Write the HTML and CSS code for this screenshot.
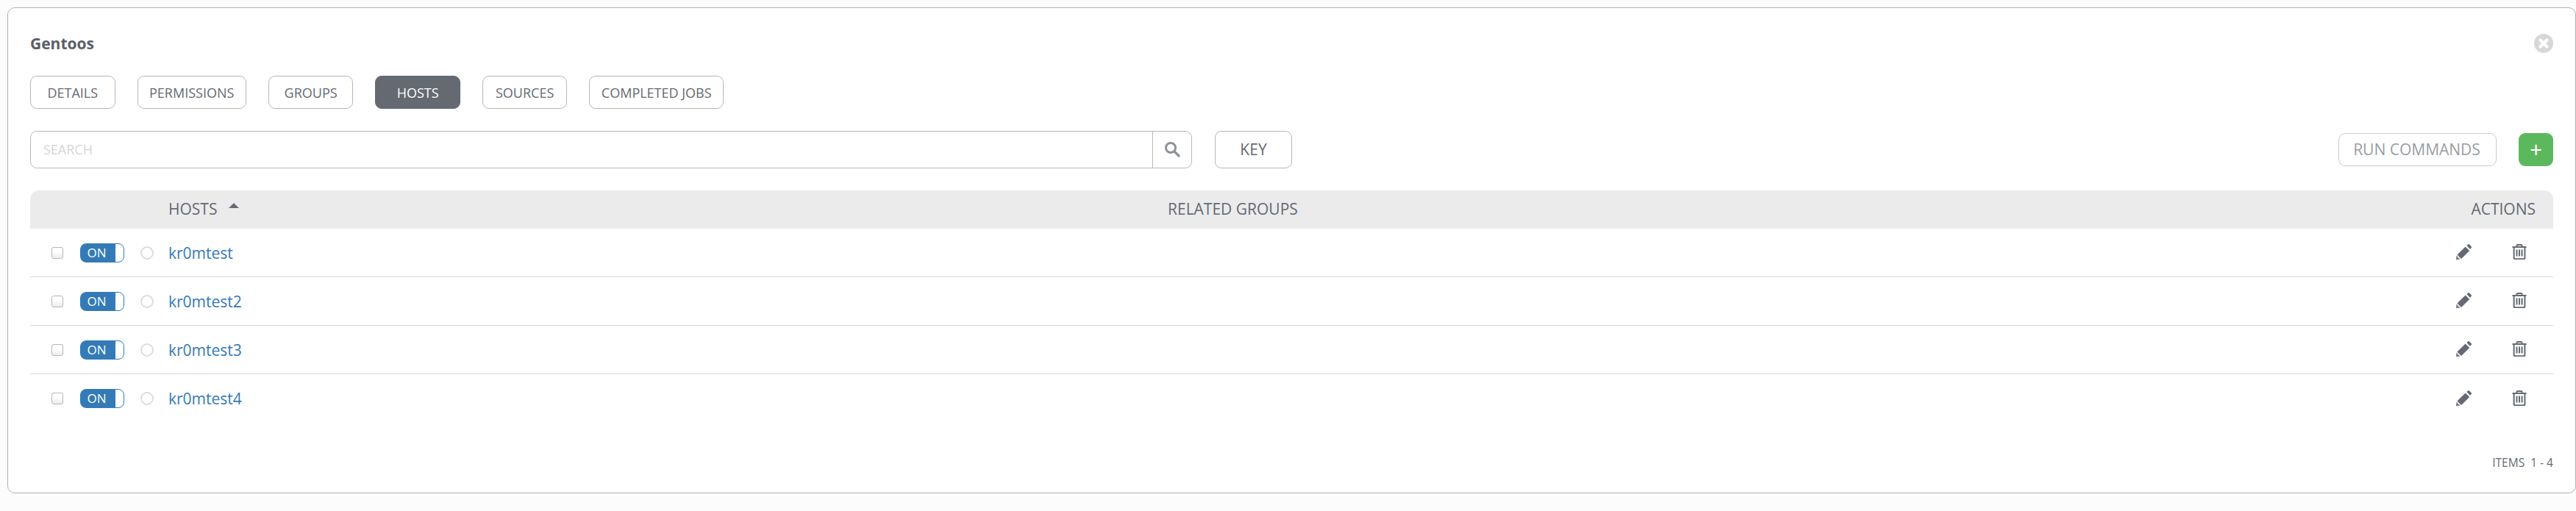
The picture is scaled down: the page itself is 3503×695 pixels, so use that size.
FILE: index.html
```html
<!DOCTYPE html>
<html>
<head>
<meta charset="utf-8">
<title>Gentoos</title>
<link rel="stylesheet" href="styles.css">
</head>
<body>
<section class="panel">
  <header class="head">
    <h1 class="title">Gentoos</h1>
    <svg class="close" viewBox="0 0 26 26"><circle cx="13" cy="13" r="13" fill="#d7d7d7"/><path d="M8.6 8.6l8.8 8.8M17.4 8.6l-8.8 8.8" stroke="#fff" stroke-width="4.4" stroke-linecap="round"/></svg>
  </header>
  <nav class="tabs">
    <a class="tab">DETAILS</a>
    <a class="tab">PERMISSIONS</a>
    <a class="tab">GROUPS</a>
    <a class="tab active">HOSTS</a>
    <a class="tab">SOURCES</a>
    <a class="tab">COMPLETED JOBS</a>
  </nav>
  <div class="toolbar">
    <div class="search">
      <span class="search-input">SEARCH</span>
      <span class="search-btn"><svg viewBox="0 0 22 22" width="22" height="22"><circle cx="9" cy="9" r="6.6" fill="none" stroke="#8f929a" stroke-width="3"/><path d="M14 14l6 6" stroke="#8f929a" stroke-width="3.2" stroke-linecap="round"/></svg></span>
    </div>
    <button class="key">KEY</button>
    <button class="run">RUN COMMANDS</button>
    <button class="add">+</button>
  </div>
  <div class="table">
    <div class="row thead">
      <span class="c-select"></span>
      <span class="c-name">HOSTS<svg class="sort" viewBox="0 0 14 7" width="14" height="7"><path d="M7 0.4l6.6 6.6H0.4z" fill="#646972" stroke="#646972" stroke-width="0.6" stroke-linejoin="round"/></svg></span>
      <span class="c-groups">RELATED GROUPS</span>
      <span class="c-actions">ACTIONS</span>
    </div>
    <div class="row">
      <span class="c-select"><i class="check"></i><span class="toggle"><b>ON</b></span><i class="status"></i></span>
      <a class="c-name link">kr0mtest</a>
      <span class="c-groups"></span>
      <span class="c-actions"><svg class="pencil" viewBox="0 0 21 21"><path d="M14.4 2l1.5-1.5a1.5 1.5 0 0 1 2.1 0l2.5 2.5a1.5 1.5 0 0 1 0 2.1L19 7.1zM12.6 3.4l5.6 5.6L7 20 1.4 14.6zM.6 15.6l4.9 4.9L0 21z" fill="#646972"/><path d="M1.6 17.4l2 2" stroke="#fff" stroke-width="1"/></svg><svg class="trash" viewBox="0 0 20 21"><path d="M0.5 4h19M6.5 4V2a1 1 0 0 1 1-1h5a1 1 0 0 1 1 1v2M2.6 4v15a1.4 1.4 0 0 0 1.4 1.2h12a1.4 1.4 0 0 0 1.4-1.2V4" fill="none" stroke="#646972" stroke-width="2"/><path d="M6.5 7.5v9M10 7.5v9M13.5 7.5v9" stroke="#646972" stroke-width="2"/></svg></span>
    </div>
    <div class="row">
      <span class="c-select"><i class="check"></i><span class="toggle"><b>ON</b></span><i class="status"></i></span>
      <a class="c-name link">kr0mtest2</a>
      <span class="c-groups"></span>
      <span class="c-actions"><svg class="pencil" viewBox="0 0 21 21"><path d="M14.4 2l1.5-1.5a1.5 1.5 0 0 1 2.1 0l2.5 2.5a1.5 1.5 0 0 1 0 2.1L19 7.1zM12.6 3.4l5.6 5.6L7 20 1.4 14.6zM.6 15.6l4.9 4.9L0 21z" fill="#646972"/><path d="M1.6 17.4l2 2" stroke="#fff" stroke-width="1"/></svg><svg class="trash" viewBox="0 0 20 21"><path d="M0.5 4h19M6.5 4V2a1 1 0 0 1 1-1h5a1 1 0 0 1 1 1v2M2.6 4v15a1.4 1.4 0 0 0 1.4 1.2h12a1.4 1.4 0 0 0 1.4-1.2V4" fill="none" stroke="#646972" stroke-width="2"/><path d="M6.5 7.5v9M10 7.5v9M13.5 7.5v9" stroke="#646972" stroke-width="2"/></svg></span>
    </div>
    <div class="row">
      <span class="c-select"><i class="check"></i><span class="toggle"><b>ON</b></span><i class="status"></i></span>
      <a class="c-name link">kr0mtest3</a>
      <span class="c-groups"></span>
      <span class="c-actions"><svg class="pencil" viewBox="0 0 21 21"><path d="M14.4 2l1.5-1.5a1.5 1.5 0 0 1 2.1 0l2.5 2.5a1.5 1.5 0 0 1 0 2.1L19 7.1zM12.6 3.4l5.6 5.6L7 20 1.4 14.6zM.6 15.6l4.9 4.9L0 21z" fill="#646972"/><path d="M1.6 17.4l2 2" stroke="#fff" stroke-width="1"/></svg><svg class="trash" viewBox="0 0 20 21"><path d="M0.5 4h19M6.5 4V2a1 1 0 0 1 1-1h5a1 1 0 0 1 1 1v2M2.6 4v15a1.4 1.4 0 0 0 1.4 1.2h12a1.4 1.4 0 0 0 1.4-1.2V4" fill="none" stroke="#646972" stroke-width="2"/><path d="M6.5 7.5v9M10 7.5v9M13.5 7.5v9" stroke="#646972" stroke-width="2"/></svg></span>
    </div>
    <div class="row last">
      <span class="c-select"><i class="check"></i><span class="toggle"><b>ON</b></span><i class="status"></i></span>
      <a class="c-name link">kr0mtest4</a>
      <span class="c-groups"></span>
      <span class="c-actions"><svg class="pencil" viewBox="0 0 21 21"><path d="M14.4 2l1.5-1.5a1.5 1.5 0 0 1 2.1 0l2.5 2.5a1.5 1.5 0 0 1 0 2.1L19 7.1zM12.6 3.4l5.6 5.6L7 20 1.4 14.6zM.6 15.6l4.9 4.9L0 21z" fill="#646972"/><path d="M1.6 17.4l2 2" stroke="#fff" stroke-width="1"/></svg><svg class="trash" viewBox="0 0 20 21"><path d="M0.5 4h19M6.5 4V2a1 1 0 0 1 1-1h5a1 1 0 0 1 1 1v2M2.6 4v15a1.4 1.4 0 0 0 1.4 1.2h12a1.4 1.4 0 0 0 1.4-1.2V4" fill="none" stroke="#646972" stroke-width="2"/><path d="M6.5 7.5v9M10 7.5v9M13.5 7.5v9" stroke="#646972" stroke-width="2"/></svg></span>
    </div>
  </div>
  <footer class="foot">ITEMS&nbsp; 1 - 4</footer>
</section>
</body>
</html>
```
FILE: styles.css
```css
* { box-sizing: border-box; }
html, body { margin: 0; }
body {
  height: 695px;
  overflow: hidden;
  background: #fcfcfc;
  padding: 10px 0 0 10px;
  font-family: "Open Sans", sans-serif;
  color: #646972;
}
.panel {
  height: 661px;
  background: #fff;
  border: 1px solid #b0b0b0;
  border-radius: 10px;
  padding: 0 30px;
  overflow: hidden;
}
.head {
  height: 92px;
  display: flex;
  align-items: center;
  justify-content: space-between;
  padding-top: 3px;
}
.title { margin: 0; font-size: 21px; font-weight: 700; color: #5b5e66; }
.close { width: 26px; height: 26px; }
.tabs { display: flex; gap: 30px; height: 45px; }
.tab {
  display: flex;
  align-items: center;
  justify-content: center;
  padding: 0 15.5px;
  min-width: 115.5px;
  border: 1px solid #b7b7b7;
  border-radius: 9px;
  font-size: 18px;
  color: #646972;
}
.tab.active { background: #646972; border-color: #646972; color: #fff; }
.toolbar { display: flex; align-items: center; margin-top: 30px; height: 50px; }
.search {
  display: flex;
  width: 1580px;
  height: 51px;
  border: 1px solid #b7b7b7;
  border-radius: 9px;
}
.search-input {
  flex: 1;
  display: flex;
  align-items: center;
  padding-left: 17px;
  font-size: 18px;
  color: #d4d6d4;
  border-right: 1px solid #b7b7b7;
}
.search-btn { width: 52px; display: flex; align-items: center; justify-content: center; }
button { font-family: inherit; background: #fff; }
.key {
  margin-left: 31px;
  width: 105px;
  height: 51px;
  border: 1px solid #b7b7b7;
  border-radius: 9px;
  font-size: 21px;
  color: #646972;
}
.run {
  margin-left: auto;
  width: 215px;
  height: 45px;
  border: 1px solid #cbcbcb;
  border-radius: 9px;
  font-size: 21px;
  color: #9a9da3;
  padding: 0 2px 0 0;
}
.add {
  margin-left: 30px;
  width: 47px;
  height: 45px;
  border: 0;
  border-radius: 9px;
  background: #5cb85c;
  color: #fff;
  font-size: 30px;
  line-height: 1;
  padding: 0;
}
.table { margin-top: 31px; }
.row {
  display: flex;
  align-items: center;
  height: 66px;
  border-bottom: 1px solid #d7d7d7;
  font-size: 21px;
}
.row.last { border-bottom: 0; }
.thead {
  height: 52px;
  background: #ebebeb;
  border-bottom: 0;
  border-radius: 12px 12px 0 0;
  padding-bottom: 2px;
}
.c-select {
  width: 188px;
  flex: none;
  display: flex;
  align-items: center;
  padding-left: 29px;
}
.check {
  width: 16px;
  height: 16px;
  border: 1px solid #b7b7b7;
  border-radius: 3px;
  background: linear-gradient(#fff 40%, #ebebeb);
}
.toggle {
  margin-left: 23px;
  width: 60px;
  height: 26px;
  border: 1px solid #337ab7;
  border-radius: 8px;
  background: #fff;
  display: flex;
}
.toggle b {
  width: 47px;
  background: #337ab7;
  border-radius: 6px 0 0 6px;
  color: #fff;
  font-weight: 400;
  font-size: 17px;
  line-height: 24px;
  text-align: center;
  padding-right: 4px;
}
.status {
  margin-left: 22px;
  width: 18px;
  height: 18px;
  border: 2px solid #dcdcd8;
  border-radius: 50%;
}
.c-name { width: 1359px; flex: none; display: flex; align-items: center; }
.thead .c-name { color: #646972; }
.sort { margin-left: 16px; margin-top: -10px; }
.link { color: #337ab7; font-size: 21px; }
.c-groups { flex: 1; }
.thead .c-groups, .thead .c-actions { color: #646972; }
.c-actions {
  width: 200px;
  flex: none;
  display: flex;
  justify-content: flex-end;
  align-items: center;
  padding-right: 24px;
}
.pencil { width: 21px; height: 21px; margin-right: 55px; margin-bottom: 2px; }
.trash { width: 20px; height: 21px; margin-right: 12px; margin-bottom: 2px; }
.foot { margin-top: 43px; text-align: right; font-size: 15.5px; color: #646972; line-height: 22px; }
```
